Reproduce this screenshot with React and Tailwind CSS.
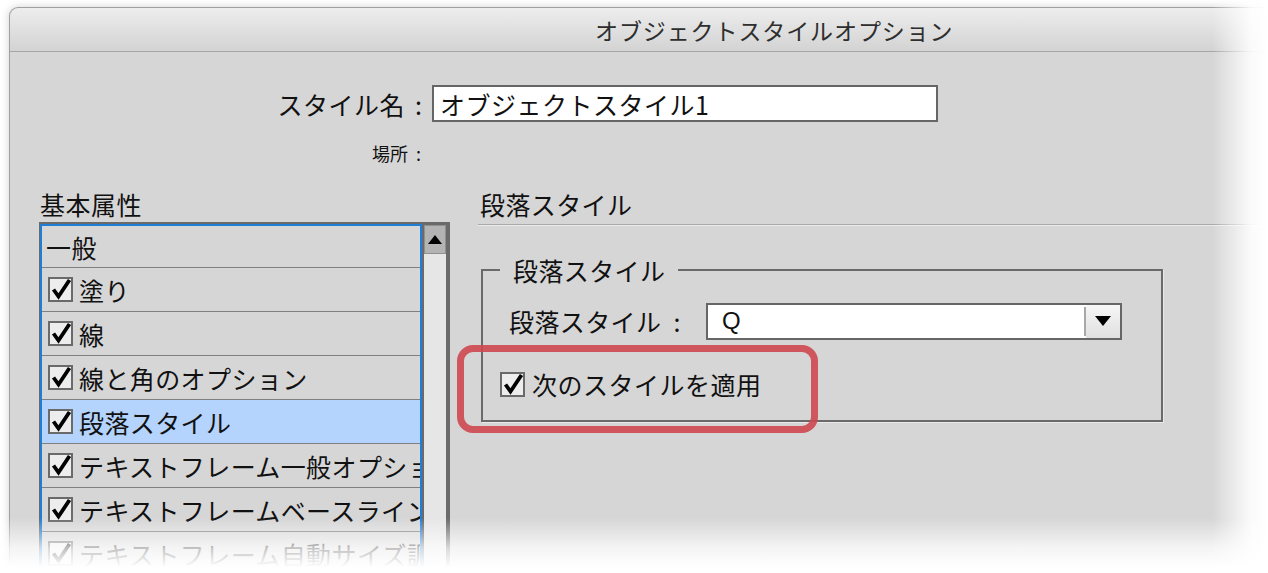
import React from "react";

const JP = "font-['Noto_Sans_CJK_JP','Liberation_Sans',sans-serif]";

function Check() {
  return (
    <svg width="25" height="25" viewBox="0 0 25 25" className="shrink-0">
      <rect x="1" y="1" width="23" height="23" fill="#ededed" stroke="#6a6a6a" strokeWidth="2" />
      <path d="M5.5 12.5 L10.5 19.5 L21.5 3" fill="none" stroke="#000" strokeWidth="3.8" strokeLinejoin="miter" />
    </svg>
  );
}

const rows = [
  { t: "一般", c: false },
  { t: "塗り", c: true },
  { t: "線", c: true },
  { t: "線と角のオプション", c: true },
  { t: "段落スタイル", c: true, sel: true },
  { t: "テキストフレーム一般オプション", c: true },
  { t: "テキストフレームベースラインオプション", c: true },
  { t: "テキストフレーム自動サイズ調整オプション", c: true },
];

export default function App() {
  return (
    <div className={`relative w-[1268px] h-[573px] overflow-hidden bg-white pl-[9px] pt-[7px] ${JP} text-[#111]`}>
      <div className="w-[1600px] h-[620px] bg-[#d6d6d6] border-l border-t border-[#a0a0a0] rounded-tl-[9px] shadow-[0_0_8px_rgba(0,0,0,0.18)] flex flex-col">
        {/* title bar */}
        <div className="h-[44px] shrink-0 rounded-tl-[9px] bg-[linear-gradient(to_bottom,#ededed,#d3d3d3)] border-b border-[#a6a6a6] flex items-center pl-[585px]">
          <span className="text-[23px] leading-[30px] text-[#2e2e2e] tracking-[0.9px]">オブジェクトスタイルオプション</span>
        </div>

        {/* style name row */}
        <div className="flex items-center mt-[33px] h-[37px]">
          <div className="w-[412px] flex justify-end items-center text-[25px] leading-[30px] whitespace-nowrap">
            <span className="tracking-[0.5px]">スタイル名</span>
            <span className="ml-[10px]">:</span>
          </div>
          <div className="ml-[10px] w-[506px] h-[37px] bg-white border-2 border-[#666] flex items-center pl-[6px] text-[25px] leading-[30px] tracking-[0.5px]">
            オブジェクトスタイル1
          </div>
        </div>

        {/* location */}
        <div className="mt-[19px] h-[24px] flex items-center">
          <div className="w-[411px] flex justify-end items-center text-[18px] leading-[24px]">
            <span>場所</span>
            <span className="ml-[8px]">:</span>
          </div>
        </div>

        {/* columns */}
        <div className="flex mt-[24px]">
          {/* left */}
          <div className="ml-[29px] w-[411px] flex flex-col">
            <div className="h-[30px] text-[25px] leading-[30px] pl-[1px] tracking-[0.5px]">基本属性</div>
            <div className="mt-[3px] flex bg-[#6a6a6a] pt-[2px] pl-[1px] pr-[3px]">
              <div className="w-[382px] border-2 border-[#1f7fd6] bg-[#d6d6d6] flex flex-col">
                {rows.map((r, i) => (
                  <div
                    key={i}
                    className={`${i === 0 ? "h-[42px]" : "h-[44px]"} shrink-0 border-b border-[#808080] flex items-center whitespace-nowrap overflow-hidden text-[25px] leading-[30px] tracking-[0.4px] ${r.sel ? "bg-[#b4d4fd]" : ""} ${r.c ? "pl-[6px] gap-[6px]" : "pl-[4px]"}`}
                  >
                    {r.c && <Check />}
                    <span>{r.t}</span>
                  </div>
                ))}
              </div>
              <div className="ml-[2px] w-[22px] flex flex-col">
                <div className="mt-[1px] h-[29px] bg-[#b3b3b3] border border-[#909090] flex items-center justify-center">
                  <svg width="14" height="9" viewBox="0 0 14 9">
                    <path d="M7 0 L14 9 L0 9 Z" fill="#000" />
                  </svg>
                </div>
                <div className="flex-1 bg-[#e6e6e6]" />
              </div>
            </div>
          </div>

          {/* right */}
          <div className="ml-[28px] flex-1 flex flex-col">
            <div className="h-[30px] text-[25px] leading-[30px] pl-[2px] tracking-[0.4px]">段落スタイル</div>
            <div className="mt-[5px] h-[1px] bg-[#a9a9a9]" />
            <div className="h-[1px] bg-[#ebebeb]" />
            <fieldset className="mt-[29px] ml-[3px] w-[682px] border-2 border-[#6a6a6a] pl-[17px] pb-[21px] m-0 pr-0 pt-0 shadow-[1px_1px_0_#e8e8e8]">
              <legend className="px-[13px] text-[25px] leading-[30px] tracking-[0.4px]">段落スタイル</legend>
              <div className="mt-[18px] flex items-center h-[36px]">
                <div className="ml-[9px] w-[197px] flex items-center text-[25px] leading-[30px] whitespace-nowrap tracking-[0.4px]">
                  <span>段落スタイル</span>
                  <span className="ml-[12px]">:</span>
                </div>
                <div className="w-[416px] h-[37px] border-2 border-[#666] bg-white flex items-stretch">
                  <div className="flex-1 flex items-center pl-[14px] text-[24px] leading-[30px] font-['Liberation_Sans',sans-serif]">Q</div>
                  <div className="w-[2px] my-[2px] bg-[#a8a8a8]" />
                  <div className="w-[34px] bg-[linear-gradient(to_bottom,#f6f6f6,#e0e0e0)] flex items-center justify-center">
                    <svg width="16" height="10" viewBox="0 0 16 10">
                      <path d="M0 0 L16 0 L8 10 Z" fill="#000" />
                    </svg>
                  </div>
                </div>
              </div>
              <div className="mt-[30px] h-[30px] flex items-center gap-[7px]">
                <Check />
                <span className="text-[25px] leading-[30px] tracking-[0.5px]">次のスタイルを適用</span>
              </div>
            </fieldset>
          </div>
        </div>
      </div>

      {/* red highlight */}
      <div className="absolute left-[457px] top-[345px] w-[361px] h-[88px] border-[7px] border-[rgba(206,72,80,0.9)] rounded-[16px]" />

      {/* fades */}
      <div className="absolute top-0 left-[1212px] w-[56px] h-full bg-[linear-gradient(to_right,rgba(255,255,255,0),rgba(255,255,255,0.9)_70%,#fff)]" />
      <div className="absolute left-0 top-[518px] w-full h-[55px] bg-[linear-gradient(to_bottom,rgba(255,255,255,0),rgba(255,255,255,0.75)_55%,#fff_90%)]" />
    </div>
  );
}
